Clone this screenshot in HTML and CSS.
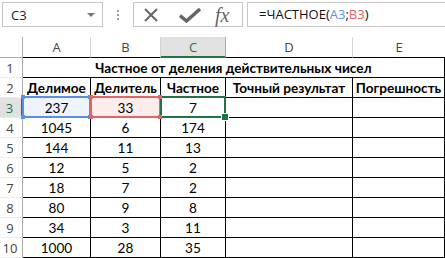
FILE: index.html
```html
<!DOCTYPE html>
<html lang="ru">
<head>
    <meta charset="UTF-8">
    <title>Частное от деления</title>
    <link rel="stylesheet" href="styles.css">
</head>
<body>
    <div class="toolbar">
        <div class="name-box">
            <span class="cell-ref">C3</span>
            <span class="drop-arrow"></span>
        </div>
        <div class="grip">
            <span></span><span></span><span></span>
        </div>
        <div class="fx-buttons">
            <svg class="icon-cancel" width="16" height="16" viewBox="0 0 16 16">
                <path d="M2 2 L14 14 M14 2 L2 14" stroke="#666" stroke-width="2" fill="none"/>
            </svg>
            <svg class="icon-enter" width="22" height="16" viewBox="0 0 22 16">
                <path d="M1 8.5 L7.5 14 L21 2" stroke="#666" stroke-width="3.4" fill="none"/>
            </svg>
            <span class="fx">fx</span>
        </div>
        <div class="formula">
            =ЧАСТНОЕ(<span class="ref-a">A3</span>;<span class="ref-b">B3</span>)
        </div>
    </div>

    <div class="sheet">
        <div class="corner"></div>
        <div class="col-head">A</div>
        <div class="col-head">B</div>
        <div class="col-head active">C</div>
        <div class="col-head">D</div>
        <div class="col-head last">E</div>

        <div class="row-head">1</div>
        <div class="cell title">Частное от деления действительных чисел</div>

        <div class="row-head">2</div>
        <div class="cell bold">Делимое</div>
        <div class="cell bold">Делитель</div>
        <div class="cell bold">Частное</div>
        <div class="cell bold">Точный результат</div>
        <div class="cell bold">Погрешность</div>

        <div class="row-head active">3</div>
        <div class="cell ref-a-cell">237</div>
        <div class="cell ref-b-cell">33</div>
        <div class="cell selected">7</div>
        <div class="cell"></div>
        <div class="cell"></div>

        <div class="row-head">4</div>
        <div class="cell">1045</div>
        <div class="cell">6</div>
        <div class="cell">174</div>
        <div class="cell"></div>
        <div class="cell"></div>

        <div class="row-head">5</div>
        <div class="cell">144</div>
        <div class="cell">11</div>
        <div class="cell">13</div>
        <div class="cell"></div>
        <div class="cell"></div>

        <div class="row-head">6</div>
        <div class="cell">12</div>
        <div class="cell">5</div>
        <div class="cell">2</div>
        <div class="cell"></div>
        <div class="cell"></div>

        <div class="row-head">7</div>
        <div class="cell">18</div>
        <div class="cell">7</div>
        <div class="cell">2</div>
        <div class="cell"></div>
        <div class="cell"></div>

        <div class="row-head">8</div>
        <div class="cell">80</div>
        <div class="cell">9</div>
        <div class="cell">8</div>
        <div class="cell"></div>
        <div class="cell"></div>

        <div class="row-head">9</div>
        <div class="cell">34</div>
        <div class="cell">3</div>
        <div class="cell">11</div>
        <div class="cell"></div>
        <div class="cell"></div>

        <div class="row-head">10</div>
        <div class="cell">1000</div>
        <div class="cell">28</div>
        <div class="cell">35</div>
        <div class="cell"></div>
        <div class="cell"></div>
    </div>
</body>
</html>
```

FILE: styles.css
```css
* {
    margin: 0;
    padding: 0;
    box-sizing: border-box;
}

:root {
    --excel-green: #217346;
    --ref-blue: #5b8ee6;
    --ref-red: #e06666;
    --ui-border: #c6c6c6;
    --head-line: #d4d4d4;
}

body {
    width: 445px;
    height: 258px;
    overflow: hidden;
    background: #fff;
    font-family: "Open Sans", "Noto Sans", sans-serif;
}

/* Formula bar */
.toolbar {
    display: flex;
    align-items: flex-start;
    height: 37px;
    padding-top: 2px;
}

.name-box {
    display: flex;
    align-items: center;
    justify-content: space-between;
    width: 101px;
    height: 25px;
    margin-left: 2px;
    padding: 0 7px 0 8px;
    border: 1px solid var(--ui-border);
    font-size: 13px;
    color: #222;
}

.drop-arrow {
    width: 0;
    height: 0;
    border-left: 4px solid transparent;
    border-right: 4px solid transparent;
    border-top: 4px solid #777;
}

.grip {
    display: flex;
    flex-direction: column;
    gap: 2px;
    width: 30px;
    height: 25px;
    padding: 8px 0 0 14px;
}

.grip span {
    width: 2px;
    height: 2px;
    background: #999;
}

.fx-buttons {
    display: flex;
    align-items: center;
    width: 110px;
    height: 25px;
    padding-left: 9px;
    border: 1px solid var(--ui-border);
}

.icon-cancel {
    margin-right: 20px;
}

.icon-enter {
    margin-right: 14px;
}

.fx {
    font-family: "Liberation Serif", serif;
    font-style: italic;
    font-size: 20px;
    color: #666;
    line-height: 1;
}

.formula {
    flex: 1;
    height: 25px;
    margin-left: 4px;
    margin-right: -4px;
    padding-left: 11px;
    border: 1px solid var(--ui-border);
    border-right: none;
    font-size: 13px;
    line-height: 23px;
    color: #111;
}

.ref-a {
    color: var(--ref-blue);
}

.ref-b {
    color: var(--ref-red);
}

/* Worksheet grid */
.sheet {
    display: grid;
    grid-template-columns: 23px 68px 70px 65px 127px 92px;
    grid-template-rows: 21px repeat(10, 20px);
    font-family: Lato, "Noto Sans", sans-serif;
    font-size: 13.6px;
    color: #000;
}

.corner {
    border-right: 1px solid #ababab;
    border-bottom: 1px solid #ababab;
}

.col-head {
    display: flex;
    align-items: center;
    justify-content: center;
    border-right: 1px solid var(--head-line);
    border-bottom: 1px solid #000;
    color: #444;
    font-family: "Open Sans", sans-serif;
    font-size: 13px;
}

.col-head.last {
    border-right: none;
}

.col-head.active {
    background: #e1e1e1;
    color: var(--excel-green);
    border-bottom: 2px solid var(--excel-green);
    border-right-color: #ababab;
}

.row-head {
    display: flex;
    align-items: center;
    justify-content: center;
    padding-right: 2px;
    border-right: 1px solid #ababab;
    border-bottom: 1px solid #ececec;
    color: #444;
    font-family: "Open Sans", sans-serif;
    font-size: 13px;
}

.row-head.active {
    background: #e1e1e1;
    color: var(--excel-green);
    border-right: 2px solid var(--excel-green);
}

.cell {
    position: relative;
    display: flex;
    align-items: center;
    justify-content: center;
    border-right: 1px solid #000;
    border-bottom: 1px solid #000;
    white-space: nowrap;
}

.cell.title {
    grid-column: 2 / span 5;
    font-weight: bold;
}

.cell.bold {
    font-weight: bold;
}

/* Formula references and active cell */
.ref-a-cell {
    background: #eef3fd;
}

.ref-b-cell {
    background: #fcecec;
}

.ref-a-cell::after,
.ref-b-cell::after,
.selected::after {
    content: "";
    position: absolute;
    top: -2px;
    left: -1px;
    right: -1px;
    bottom: -1px;
    border: 2px solid var(--ref-blue);
}

.ref-b-cell::after {
    border-color: var(--ref-red);
}

.selected::after {
    border-color: var(--excel-green);
}

.ref-a-cell::before,
.ref-b-cell::before {
    content: "";
    position: absolute;
    z-index: 1;
    top: -3px;
    left: -2px;
    right: -2px;
    bottom: -2px;
    background:
        linear-gradient(var(--ref-blue), var(--ref-blue)) left top / 4px 4px no-repeat,
        linear-gradient(var(--ref-blue), var(--ref-blue)) right top / 4px 4px no-repeat,
        linear-gradient(var(--ref-blue), var(--ref-blue)) left bottom / 4px 4px no-repeat,
        linear-gradient(var(--ref-blue), var(--ref-blue)) right bottom / 4px 4px no-repeat;
}

.ref-b-cell::before {
    z-index: 2;
    background:
        linear-gradient(var(--ref-red), var(--ref-red)) left top / 4px 4px no-repeat,
        linear-gradient(var(--ref-red), var(--ref-red)) right top / 4px 4px no-repeat,
        linear-gradient(var(--ref-red), var(--ref-red)) left bottom / 4px 4px no-repeat,
        linear-gradient(var(--ref-red), var(--ref-red)) right bottom / 4px 4px no-repeat;
}

.selected::before {
    content: "";
    position: absolute;
    z-index: 3;
    right: -4px;
    bottom: -4px;
    width: 6px;
    height: 6px;
    background: var(--excel-green);
    border: 1px solid #fff;
}
```
